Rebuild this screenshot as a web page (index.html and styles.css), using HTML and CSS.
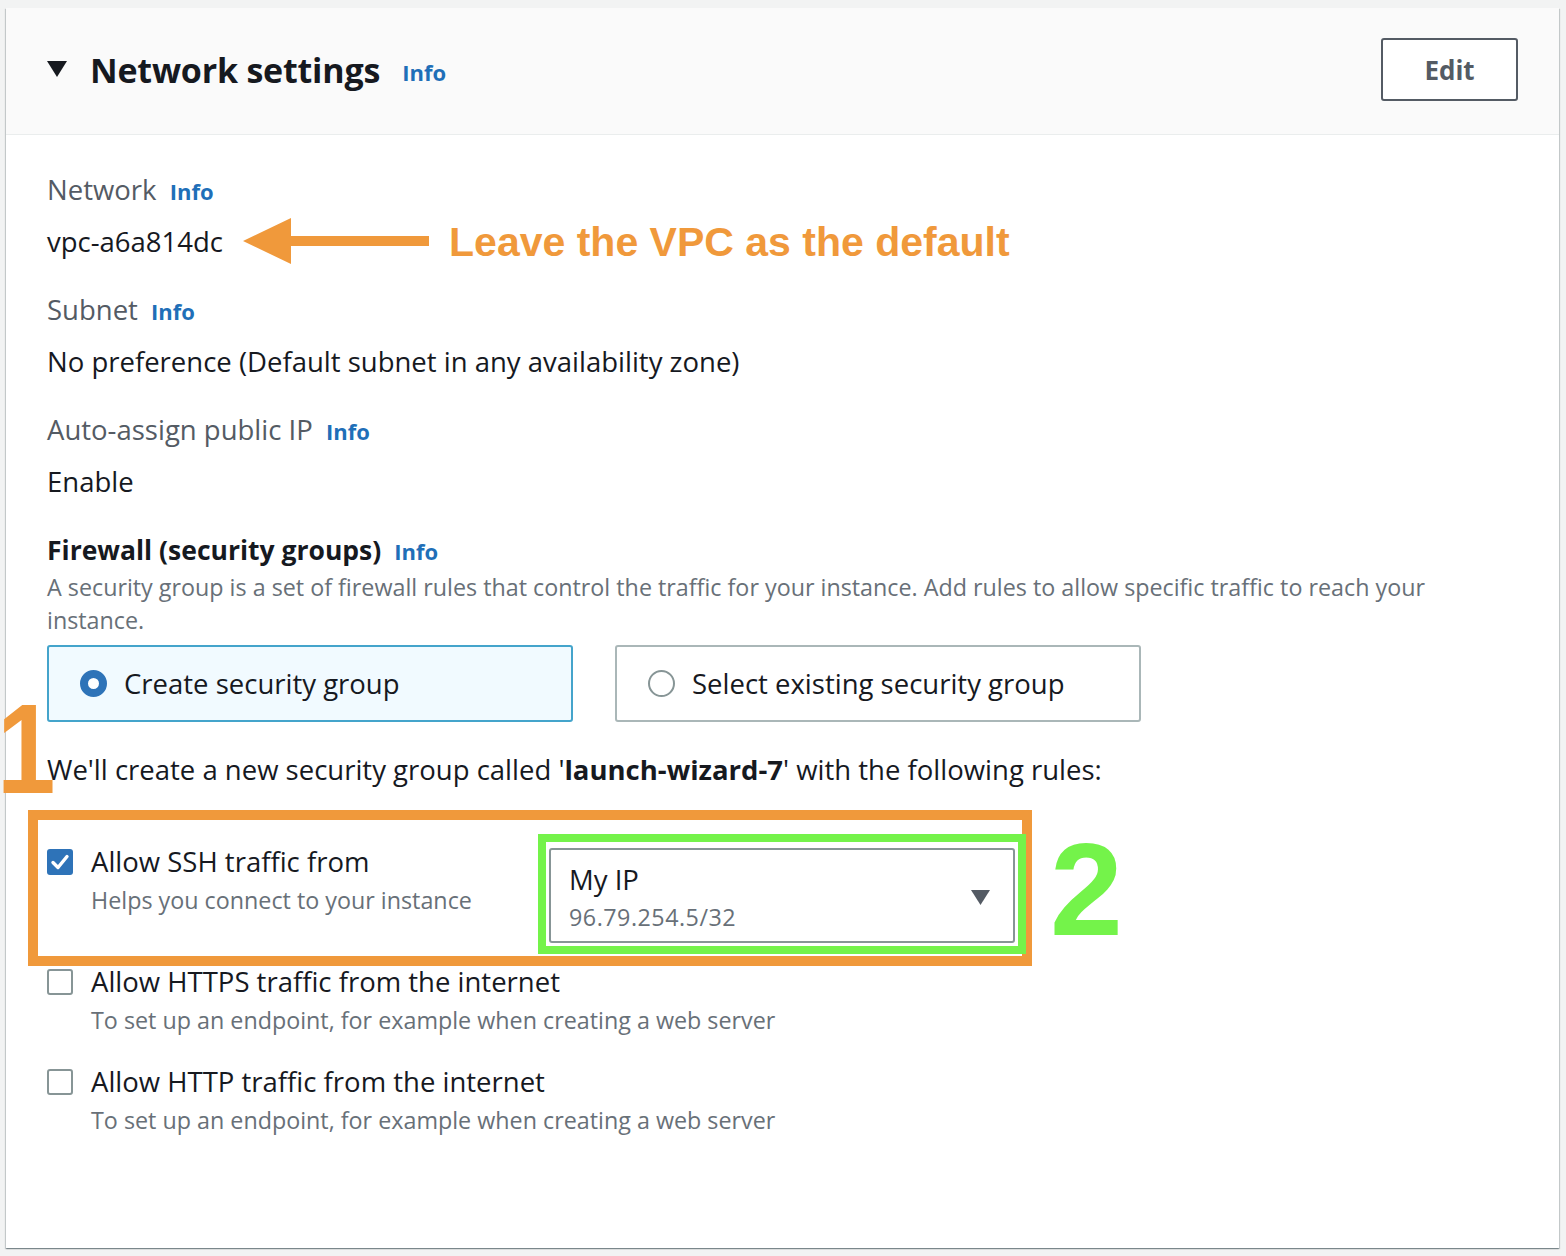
FILE: index.html
```html
<!DOCTYPE html>
<html lang="en">
<head>
<meta charset="utf-8">
<title>Network settings</title>
<link rel="stylesheet" href="styles.css">
</head>
<body>
<div class="page">
  <section class="card">
    <header class="card-head">
      <div class="head-left">
        <svg class="caret" width="20" height="16" viewBox="0 0 20 16" aria-hidden="true"><path d="M0 0H20L10 16Z" fill="#16191f"/></svg>
        <h2 class="title">Network settings</h2>
        <a class="info info-head">Info</a>
      </div>
      <button class="btn">Edit</button>
    </header>

    <div class="card-body">
      <div class="field">
        <div class="label">Network <a class="info">Info</a></div>
        <div class="value value-row">
          <span>vpc-a6a814dc</span>
          <svg class="arrow" width="186" height="50" viewBox="0 0 186 50" aria-hidden="true">
            <path d="M0 24L48 1V19H186V29H48V47Z" fill="#f0993b"/>
          </svg>
          <span class="note">Leave the VPC as the default</span>
        </div>
      </div>

      <div class="field">
        <div class="label">Subnet <a class="info">Info</a></div>
        <div class="value">No preference (Default subnet in any availability zone)</div>
      </div>

      <div class="field">
        <div class="label">Auto-assign public IP <a class="info">Info</a></div>
        <div class="value">Enable</div>
      </div>

      <div class="firewall">
        <div class="fw-title">Firewall (security groups) <a class="info">Info</a></div>
        <p class="desc">A security group is a set of firewall rules that control the traffic for your instance. Add rules to allow specific traffic to reach your instance.</p>
        <div class="tiles">
          <div class="tile tile-on">
            <span class="radio radio-on"></span>
            <span>Create security group</span>
          </div>
          <div class="tile">
            <span class="radio"></span>
            <span>Select existing security group</span>
          </div>
        </div>
        <p class="create-note">We'll create a new security group called '<b>launch-wizard-7</b>' with the following rules:</p>

        <div class="rule rule-ssh">
          <div class="rule-left">
            <span class="check check-on">
              <svg width="26" height="26" viewBox="0 0 26 26" aria-hidden="true"><path d="M6 13.5L11 18.5L20 7.5" fill="none" stroke="#fff" stroke-width="3.4" stroke-linecap="round" stroke-linejoin="round"/></svg>
            </span>
            <div>
              <div class="rule-title">Allow SSH traffic from</div>
              <div class="rule-desc">Helps you connect to your instance</div>
            </div>
          </div>
          <div class="select">
            <div>
              <div class="sel-main">My IP</div>
              <div class="sel-sub">96.79.254.5/32</div>
            </div>
            <svg class="sel-caret" width="19" height="15" viewBox="0 0 19 15" aria-hidden="true"><path d="M0 0H19L9.5 15Z" fill="#545b64"/></svg>
          </div>
        </div>

        <div class="rule rule-https">
          <div class="rule-left">
            <span class="check"></span>
            <div>
              <div class="rule-title">Allow HTTPS traffic from the internet</div>
              <div class="rule-desc">To set up an endpoint, for example when creating a web server</div>
            </div>
          </div>
        </div>

        <div class="rule rule-http">
          <div class="rule-left">
            <span class="check"></span>
            <div>
              <div class="rule-title">Allow HTTP traffic from the internet</div>
              <div class="rule-desc">To set up an endpoint, for example when creating a web server</div>
            </div>
          </div>
        </div>
      </div>
    </div>

    <div class="mark mark-orange"></div>
    <div class="mark mark-green"></div>
    <div class="num num-1">1</div>
    <div class="num num-2">2</div>
  </section>
</div>
</body>
</html>
```

FILE: styles.css
```css
* { box-sizing: border-box; }

html, body {
  margin: 0;
  padding: 0;
  background: #f2f3f3;
}

body {
  font-family: "Open Sans", "Noto Sans", sans-serif;
  color: #16191f;
}

.page {
  padding: 8px 7px 8px 6px;
}

.card {
  position: relative;
  height: 1240px;
  background: #ffffff;
  box-shadow: 0 1px 1px 0 rgba(0, 28, 36, 0.3), 1px 1px 1px 0 rgba(0, 28, 36, 0.15), -1px 1px 1px 0 rgba(0, 28, 36, 0.15);
}

.card-head {
  height: 127px;
  background: #fafafa;
  border-bottom: 1px solid #eaeded;
  display: flex;
  align-items: center;
  justify-content: space-between;
  padding: 0 41px 3px 41px;
}

.head-left {
  display: flex;
  align-items: center;
}

.caret {
  display: block;
  margin-right: 23px;
  margin-top: -1px;
}

.title {
  margin: 0;
  font-size: 34px;
  font-weight: 700;
  line-height: 44px;
  letter-spacing: -0.2px;
}

.info {
  color: #1f6fb8;
  font-size: 22px;
  font-weight: 700;
  text-decoration: none;
  margin-left: 6px;
}

.info-head {
  margin-left: 22px;
  margin-top: 5px;
}

.btn {
  width: 137px;
  height: 63px;
  background: #ffffff;
  border: 2px solid #545b64;
  border-radius: 3px;
  font-family: inherit;
  font-size: 26px;
  font-weight: 700;
  color: #545b64;
  padding: 0;
}

.card-body {
  padding: 35px 41px 0 41px;
}

.field {
  margin-bottom: 28px;
}

.label {
  font-size: 27.5px;
  line-height: 40px;
  color: #545b64;
}

.value {
  font-size: 27.5px;
  line-height: 40px;
  margin-top: 11px;
  color: #16191f;
}

.value-row {
  display: flex;
  align-items: center;
  height: 40px;
}

.arrow {
  display: block;
  margin: -5px 20px -5px 20px;
}

.note {
  font-family: "Liberation Sans", Arial, sans-serif;
  font-weight: 700;
  font-size: 41px;
  line-height: 40px;
  color: #f0993b;
}

.fw-title {
  font-size: 26.5px;
  font-weight: 700;
  line-height: 40px;
}

.fw-title .info {
  margin-left: 6px;
}

.desc {
  margin: 0;
  font-size: 23.3px;
  line-height: 33px;
  color: #687078;
}

.tiles {
  display: flex;
  gap: 42px;
  margin-top: 8px;
}

.tile {
  width: 526px;
  height: 77px;
  border: 2px solid #aab7b8;
  border-radius: 3px;
  display: flex;
  align-items: center;
  padding-left: 31px;
  font-size: 27.5px;
  gap: 17px;
}

.tile-on {
  background: #f1faff;
  border-color: #44a4cb;
}

.radio {
  width: 27px;
  height: 27px;
  border-radius: 50%;
  border: 2px solid #879596;
  background: #fff;
  flex: none;
}

.radio-on {
  border: 8.5px solid #2e73b8;
}

.create-note {
  margin: 28px 0 0 0;
  font-size: 27.5px;
  line-height: 40px;
}

.create-note b {
  font-weight: 700;
}

.rule {
  display: flex;
  align-items: flex-start;
}

.rule-ssh {
  margin-top: 52px;
}

.rule-https {
  margin-top: 19px;
}

.rule-http {
  margin-top: 25px;
}

.rule-left {
  display: flex;
  align-items: flex-start;
  gap: 18px;
  width: 502px;
  flex: none;
}

.check {
  width: 26px;
  height: 26px;
  border: 2px solid #879596;
  border-radius: 3px;
  margin-top: 7px;
  flex: none;
  background: #fff;
}

.check-on {
  background: #2e73b8;
  border: none;
}

.check-on svg {
  display: block;
}

.rule-title {
  font-size: 27.5px;
  line-height: 40px;
}

.rule-desc {
  font-size: 23.3px;
  line-height: 33px;
  color: #687078;
  margin-top: 2px;
  white-space: nowrap;
}

.select {
  width: 466px;
  height: 95px;
  margin-top: 6px;
  border: 2px solid #879596;
  border-radius: 3px;
  display: flex;
  align-items: flex-start;
  justify-content: space-between;
  padding: 10px 23px 0 18px;
}

.sel-main {
  font-size: 27.5px;
  line-height: 40px;
}

.sel-sub {
  font-size: 23.3px;
  line-height: 33px;
  color: #687078;
  margin-top: 1px;
  letter-spacing: 0.5px;
}

.sel-caret {
  display: block;
  margin-top: 30px;
}

.mark {
  position: absolute;
  pointer-events: none;
}

.mark-orange {
  left: 22px;
  top: 802px;
  width: 1004px;
  height: 156px;
  border: 10px solid #f0993b;
}

.mark-green {
  left: 532px;
  top: 826px;
  width: 488px;
  height: 120px;
  border: 8px solid #74f34a;
}

.num {
  position: absolute;
  font-family: "Liberation Sans", Arial, sans-serif;
  font-weight: 700;
  font-size: 128px;
  line-height: 128px;
}

.num-1 {
  left: -9px;
  top: 677px;
  color: #f0993b;
  transform: scaleX(0.82);
  transform-origin: 0 0;
}

.num-2 {
  left: 1044px;
  top: 816px;
  font-size: 131px;
  line-height: 131px;
  color: #74f34a;
}
```
